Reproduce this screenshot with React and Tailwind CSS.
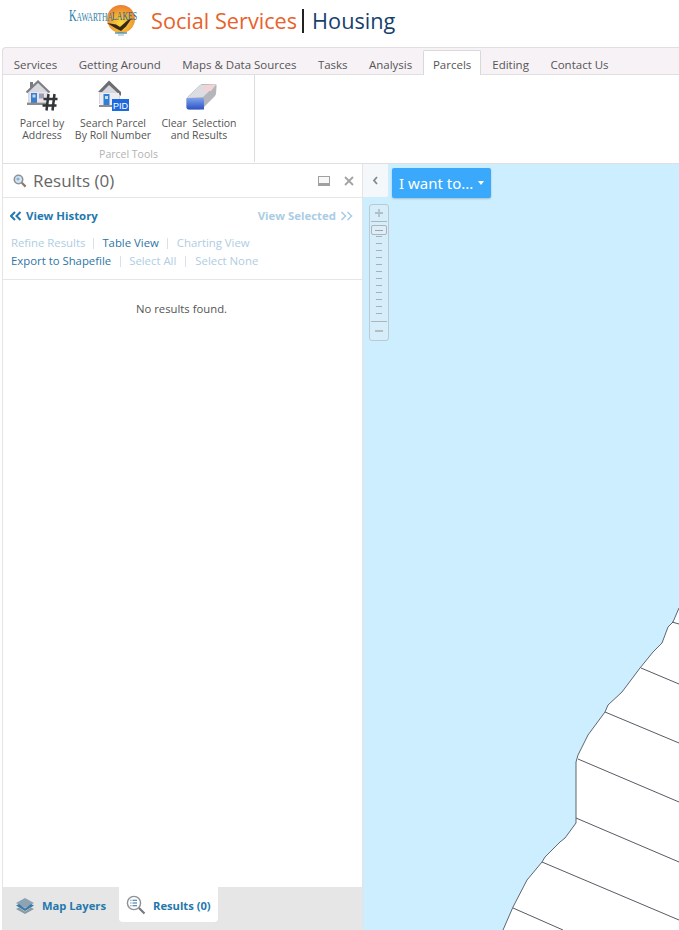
import React from "react";

const font = { fontFamily: '"Open Sans", "Noto Sans", sans-serif' };
const serif = { fontFamily: '"Liberation Serif", serif' };

function Logo() {
  return (
    <div className="relative w-[68px] h-[36px]">
      <svg width="68" height="36" viewBox="0 0 68 36" className="absolute left-0 top-0">
        <defs>
          <radialGradient id="sun" cx="0.5" cy="0.65" r="0.65">
            <stop offset="0" stopColor="#fbdc3a" />
            <stop offset="1" stopColor="#ec7c30" />
          </radialGradient>
        </defs>
        <circle cx="52" cy="15" r="14" fill="url(#sun)" />
        <path d="M38 19 L47 20.5 L51 23 L59 16 L63 14 L57 22.5 L52 27 L47 24.5 Z" fill="#33291c" />
        <path d="M46 29 H58" stroke="#2c7fa8" strokeWidth="1.2" />
        <path d="M49 31 H55" stroke="#8db4c8" strokeWidth="1" />
      </svg>
      <span className="absolute left-0 top-[2px] text-[12px] leading-[20px] text-[#1f7ea6] whitespace-nowrap origin-left scale-x-[0.62]" style={serif}>
        <span className="text-[17px]">K</span>AWARTHA
      </span>
      <span className="absolute left-[43px] top-[3px] text-[13px] leading-[18px] text-[#24648a] whitespace-nowrap origin-left scale-x-[0.6]" style={serif}>
        LAKES
      </span>
    </div>
  );
}

function AddressIcon() {
  return (
    <svg width="32" height="31" viewBox="0 0 32 31">
      <rect x="4" y="2" width="3" height="6" fill="#7a7c80" />
      <path d="M2 12 L12 2 L22 12 L22 22 L2 22 Z" fill="#d8d9de" />
      <path d="M0.5 12.5 L12 1.5 L23.5 12.5" fill="none" stroke="#7d7f84" strokeWidth="2.2" />
      <rect x="3.5" y="12" width="17" height="10" fill="#e8e5ea" />
      <rect x="5" y="13" width="6" height="10" fill="#3a7fcf" />
      <rect x="6.5" y="14.5" width="3" height="3" fill="#bcdcf6" />
      <rect x="13" y="13.5" width="5" height="5" fill="#9a9fb8" />
      <rect x="1" y="22.5" width="21" height="2.5" fill="#8b8c90" />
      <path d="M22.5 14 L20.5 30.5 M28.5 14 L26.5 30.5 M17.5 19 H31.5 M16.5 25.5 H30.5" stroke="#333438" strokeWidth="2.5" fill="none" />
    </svg>
  );
}

function RollIcon() {
  return (
    <svg width="32" height="31" viewBox="0 0 32 31">
      <path d="M2 12 L12 1 L23 12 L23 24 L2 24 Z" fill="#d7d8dd" />
      <path d="M12 0.5 L24 12 L24 16 L12 5 L5 12 L1 12 Z" fill="#6b6d72" />
      <rect x="3" y="13" width="19" height="12" fill="#eeecee" />
      <rect x="6.5" y="14" width="6" height="11" fill="#2f7fd6" />
      <rect x="8" y="16" width="3" height="3" fill="#c4e1f8" />
      <rect x="2" y="25" width="14" height="2" fill="#8b8c90" />
      <rect x="15" y="19" width="17" height="12" fill="#1d6ae0" />
      <text x="23.5" y="28.5" textAnchor="middle" fontSize="9" fill="#ffffff" fontFamily="Liberation Sans, sans-serif">PID</text>
    </svg>
  );
}

function EraserIcon() {
  return (
    <svg width="31" height="28" viewBox="0 0 31 28">
      <defs>
        <linearGradient id="er" x1="0" y1="0" x2="0" y2="1">
          <stop offset="0" stopColor="#7fa3ea" />
          <stop offset="1" stopColor="#2c52c6" />
        </linearGradient>
      </defs>
      <path d="M0.5 16 Q1 14 3 12.5 L14 2 Q15 1 17 1 L29 1 Q31 1 30.5 4 L30 11 Q29.5 13 27 15 L18 24 Q16 26.5 13 26.5 L3 26.5 Q0.5 26.5 0.5 24 Z" fill="#b4b6bc" />
      <path d="M1 15 L14.5 2 L30 1.5 L17 14 Z" fill="#dcdde2" />
      <path d="M21 2 L30 1.5 L25 8 L15 8 Z" fill="#f3d3d5" />
      <path d="M0.5 15 H17 Q18 15 18 17 V26.5 H3 Q0.5 26.5 0.5 24 Z" fill="url(#er)" />
    </svg>
  );
}

function SmallSearch() {
  return (
    <svg width="14" height="14" viewBox="0 0 14 14">
      <circle cx="5.5" cy="5.5" r="4.2" fill="#d6e6f3" stroke="#8f9296" strokeWidth="1.6" />
      <circle cx="5" cy="5" r="1.6" fill="#7fb4dc" />
      <path d="M8.8 8.8 L12.6 12.6" stroke="#8a7a6a" strokeWidth="2.2" />
    </svg>
  );
}

function LayersIcon() {
  return (
    <svg width="20" height="18" viewBox="0 0 20 18">
      <path d="M10 1 L19 6 L10 11 L1 6 Z" fill="#8da3b4" />
      <path d="M1 8.5 L4 7 L10 11.5 L16 7 L19 8.5 L10 14 Z" fill="#3b7aa6" />
      <path d="M1 12 L4 10.5 L10 14.5 L16 10.5 L19 12 L10 17 Z" fill="#8a9aa6" />
    </svg>
  );
}

function ResultsIcon() {
  return (
    <svg width="20" height="20" viewBox="0 0 20 20">
      <circle cx="8" cy="8" r="6.6" fill="#fff" stroke="#8e9094" strokeWidth="1.4" />
      <path d="M6.5 5.2 H11 M6.5 8 H11 M6.5 10.8 H11" stroke="#2b6ea3" strokeWidth="1.1" />
      <path d="M4.4 5.2 H5.4 M4.4 8 H5.4 M4.4 10.8 H5.4" stroke="#2b6ea3" strokeWidth="1.1" />
      <path d="M13 13 L18.5 18.5" stroke="#77797c" strokeWidth="2.2" />
    </svg>
  );
}

function MapCanvas() {
  const coast = "679,608 673,622 668,627 662,643 653,652 640,668 622,692 608,705 605,712 588,735 578,755 576,762 576,823 565,838 560,842 545,857 542,862 527,880 513,907 503,930";
  const shift = (p) => p.split(" ").map((c) => { const [x, y] = c.split(","); return `${x - 363},${y - 164}`; }).join(" ");
  const lines = [
    [672, 622, 679, 624],
    [641, 668, 679, 684],
    [605, 712, 679, 743],
    [578, 759, 679, 802],
    [576, 818, 679, 862],
    [542, 862, 679, 920],
    [513, 908, 563, 930],
  ];
  return (
    <svg width="316" height="766" viewBox="0 0 316 766" className="absolute left-0 top-0">
      <polygon points={`${shift(coast)} 316,766 316,444`} fill="#ffffff" />
      <polyline points={shift(coast)} fill="none" stroke="#5f666e" strokeWidth="1" />
      {lines.map((l, i) => (
        <line key={i} x1={l[0] - 363} y1={l[1] - 164} x2={l[2] - 363} y2={l[3] - 164} stroke="#555b62" strokeWidth="1" />
      ))}
    </svg>
  );
}

const tabs = ["Services", "Getting Around", "Maps & Data Sources", "Tasks", "Analysis"];

export default function App() {
  return (
    <div className="w-[679px] h-[930px] overflow-hidden bg-white flex flex-col text-[#555]" style={font}>
      <header className="h-[47px] shrink-0 flex items-start pl-[69px] pt-[4px] bg-white">
        <Logo />
        <div className="ml-[14px] flex items-center h-[34px] text-[21.7px] leading-[34px] whitespace-nowrap">
          <span className="text-[#e8622c]">Social Services</span>
          <span className="ml-[5px] w-[2px] h-[24px] bg-[#222] shrink-0" />
          <span className="ml-[8px] text-[#163f6e]">Housing</span>
        </div>
      </header>

      <div className="ml-[2px] shrink-0 flex flex-col">
        <nav className="h-[27px] flex items-end bg-[#f6f2f5] border-t border-l border-[#e2dee1] rounded-tl-[4px] text-[11.5px] text-[#555] whitespace-nowrap">
          {tabs.map((t) => (
            <span key={t} className="h-[26px] leading-[33px] px-[10.7px]">{t}</span>
          ))}
          <span className="h-[25px] leading-[28px] px-[9px] bg-white border border-b-0 border-[#d9d9d9] rounded-t-[2px] text-[#555] relative top-[1px]">Parcels</span>
          <span className="h-[26px] leading-[33px] px-[11px]">Editing</span>
          <span className="h-[26px] leading-[33px] px-[10.5px]">Contact Us</span>
        </nav>

        <div className="h-[90px] bg-white border-t border-l border-b border-[#e0e0e0] flex text-[10.5px] leading-[12px] text-[#555]">
          <div className="w-[252px] h-[87px] border-r border-[#dcdcdc] flex flex-col">
            <div className="flex h-[72px] items-start">
              <div className="w-[78px] flex flex-col items-center">
                <div className="h-[31px] mt-[5px] ml-[-1px]"><AddressIcon /></div>
                <div className="mt-[6px] text-center">Parcel by<br />Address</div>
              </div>
              <div className="w-[64px] flex flex-col items-center whitespace-nowrap">
                <div className="h-[31px] mt-[5px]"><RollIcon /></div>
                <div className="mt-[6px] text-center">Search Parcel<br />By Roll Number</div>
              </div>
              <div className="ml-[15px] w-[78px] flex flex-col items-center whitespace-nowrap">
                <div className="h-[28px] mt-[8px] ml-[4px]"><EraserIcon /></div>
                <div className="mt-[6px] text-center">Clear&nbsp; Selection<br />and Results</div>
              </div>
            </div>
            <div className="text-center text-[10.5px] leading-[14px] text-[#b2b2b2]">Parcel Tools</div>
          </div>
        </div>
      </div>

      <div className="flex-1 flex min-h-0 ml-[2px]">
        <aside className="w-[361px] shrink-0 flex flex-col bg-white border-l border-r border-[#e4e4e4]">
          <div className="h-[34px] shrink-0 flex items-center border-b border-[#e6e6e6] pl-[10px] pr-[8px]">
            <SmallSearch />
            <span className="ml-[6px] text-[17px] leading-[24px] mt-[1px] text-[#666]">Results (0)</span>
            <div className="ml-auto flex items-center gap-[14px]">
              <span className="block w-[12px] h-[10px] border border-[#a0a0a0] border-b-[3px] bg-[#f8f8f8]" />
              <svg width="10" height="10" viewBox="0 0 10 10"><path d="M1 1 L9 9 M9 1 L1 9" stroke="#a3a3a3" strokeWidth="1.8" /></svg>
            </div>
          </div>

          <div className="h-[82px] shrink-0 border-b border-[#e6e6e6] text-[11.35px] leading-[18px] pl-[7px] pr-[9px] pt-[7px] text-[#afcde2]">
            <div className="flex justify-between items-center text-[11.4px] font-bold leading-[22px]">
              <span className="text-[#2478ad] flex items-center gap-[4px]">
                <svg width="12" height="10" viewBox="0 0 12 10"><path d="M5 1 L1 5 L5 9 M10.5 1 L6.5 5 L10.5 9" fill="none" stroke="#2478ad" strokeWidth="2" /></svg>
                View History
              </span>
              <span className="flex items-center gap-[4px] text-[#aacde4]">
                View Selected
                <svg width="13" height="10" viewBox="0 0 13 10"><path d="M1.5 1 L5.5 5 L1.5 9 M7.5 1 L11.5 5 L7.5 9" fill="none" stroke="#aacde4" strokeWidth="1.6" /></svg>
              </span>
            </div>
            <div className="flex items-center mt-[7px] pl-[1px]">
              <span>Refine Results</span>
              <span className="mx-[8px] w-px h-[11px] bg-[#d7e2ea]" />
              <span className="text-[#2e75a6]">Table View</span>
              <span className="mx-[8.5px] w-px h-[11px] bg-[#d7e2ea]" />
              <span>Charting View</span>
            </div>
            <div className="flex items-center pl-[1px]">
              <span className="text-[#2e75a6]">Export to Shapefile</span>
              <span className="mx-[8.5px] w-px h-[11px] bg-[#d7e2ea]" />
              <span>Select All</span>
              <span className="mx-[9px] w-px h-[11px] bg-[#d7e2ea]" />
              <span>Select None</span>
            </div>
          </div>

          <div className="flex-1 pt-[21px] pr-[2px] text-center text-[11.3px] leading-[16px] text-[#555]">No results found.</div>

          <div className="h-[43px] shrink-0 bg-[#e6e6e6] flex items-start text-[11.2px] font-bold text-[#2478ad]">
            <div className="w-[116px] h-[38px] pl-[12px] flex items-center gap-[7px]">
              <LayersIcon />
              <span>Map Layers</span>
            </div>
            <div className="w-[99px] h-[35px] bg-white rounded-b-[4px] pl-[7px] flex items-center gap-[7px]">
              <ResultsIcon />
              <span className="mt-[3px]">Results (0)</span>
            </div>
          </div>
        </aside>

        <main className="relative flex-1 bg-[#cceeff] overflow-hidden">
          <MapCanvas />
          <div className="absolute left-0 top-0 w-[25px] h-[33px] bg-[#f5f8fb] rounded-br-[2px] flex items-center justify-center">
            <svg width="7" height="9" viewBox="0 0 7 9"><path d="M5 1 L2 4.5 L5 8" fill="none" stroke="#888" strokeWidth="1.8" /></svg>
          </div>
          <div className="absolute left-[29px] top-[4px] w-[99px] h-[30px] rounded-[2px] bg-[#3ba9fb] text-white text-[15px] leading-[30px] pl-[7px] flex items-center shadow-[0_1px_2px_rgba(0,0,0,0.2)]" style={{ fontFamily: '"Noto Sans", "Open Sans", sans-serif' }}>
            I want to...
            <span className="ml-[5px] w-0 h-0 border-l-[3.5px] border-r-[3.5px] border-t-[4px] border-l-transparent border-r-transparent border-t-white" />
          </div>
          <div className="absolute left-[6px] top-[40px] w-[20px] h-[137px] rounded-[3px] border border-[#bcc9d1] bg-[#d5eefa] flex flex-col items-center">
            <svg width="10" height="10" viewBox="0 0 10 10" className="mt-[3px] shrink-0"><path d="M5 1 V9 M1 5 H9" stroke="#b4bdc4" strokeWidth="1.8" /></svg>
            <span className="mt-[3px] h-px w-[16px] bg-[#aab5bd] shrink-0" />
            <span className="mt-[3px] w-[16px] h-[10px] rounded-[2px] border border-[#aab5bd] bg-[#dfeef6] flex items-center justify-center shrink-0"><span className="w-[8px] h-px bg-[#9aa5ad]" /></span>
            <div className="mt-[1px] flex flex-col items-center gap-[6px] shrink-0">
              {Array.from({ length: 12 }).map((_, i) => (
                <span key={i} className="block h-px w-[6px] bg-[#a5b0b8]" />
              ))}
            </div>
            <span className="mt-[7px] h-px w-[16px] bg-[#aab5bd] shrink-0" />
            <span className="mt-[8px] h-[2px] w-[8px] bg-[#b4bdc4] shrink-0" />
          </div>
        </main>
      </div>
    </div>
  );
}
